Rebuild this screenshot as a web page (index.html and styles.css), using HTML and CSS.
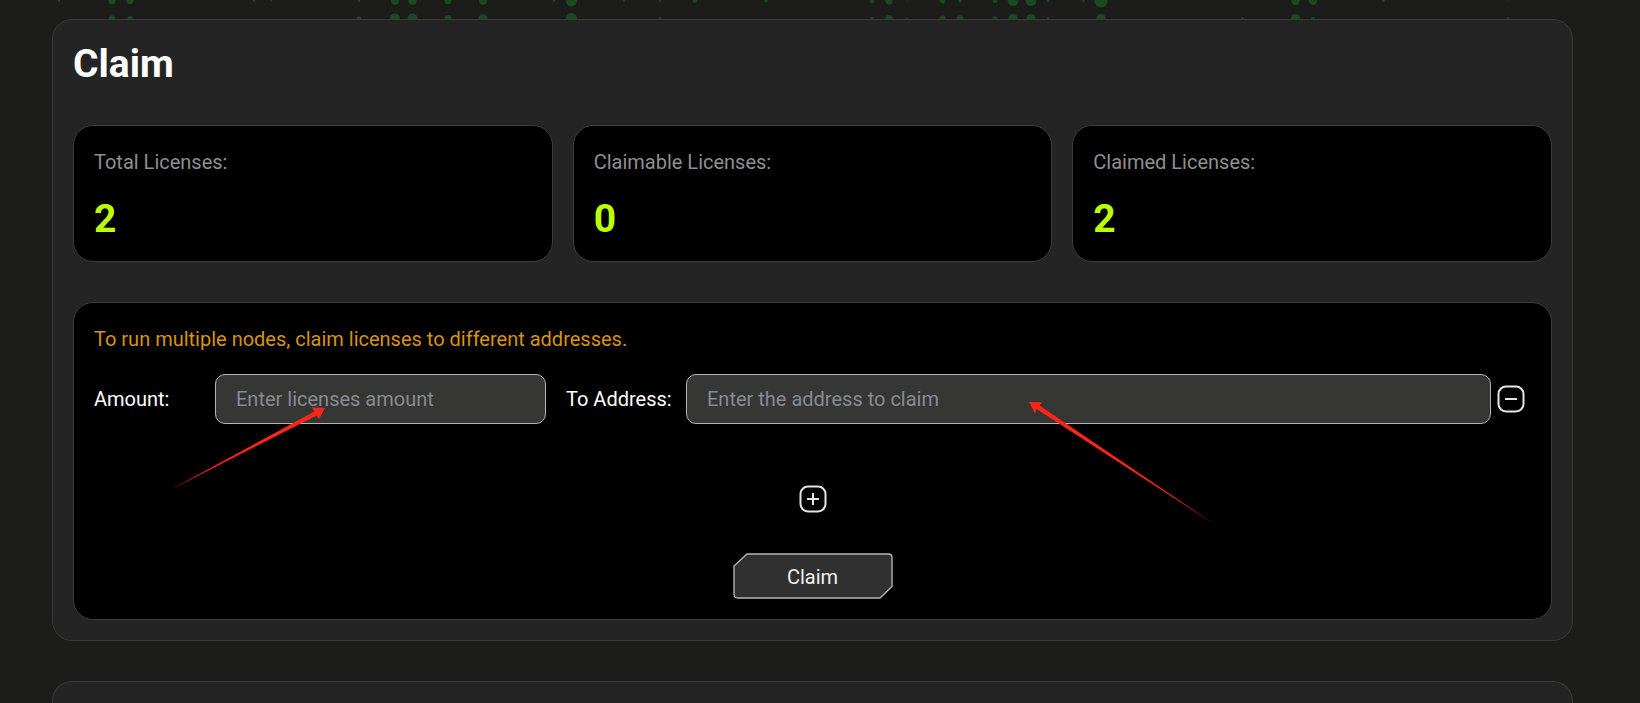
FILE: index.html
```html
<!DOCTYPE html>
<html lang="en">
<head>
<meta charset="utf-8">
<title>Claim</title>
<link rel="stylesheet" href="styles.css">
</head>
<body>
<svg class="dots" width="1640" height="36" viewBox="0 0 1640 36" aria-hidden="true">
  <g>
    <circle cx="59" cy=".8" r="1.3"/><circle cx="112" cy=".8" r="3.6"/><circle cx="130" cy=".8" r="3.4"/><circle cx="254" cy=".8" r="1.3"/><circle cx="271" cy=".8" r="1"/><circle cx="359" cy=".8" r="1.3"/><circle cx="395" cy=".8" r="4"/><circle cx="412.5" cy=".8" r="4.3"/><circle cx="448" cy=".8" r="3.5"/><circle cx="483" cy=".8" r="4"/><circle cx="554" cy=".8" r="1.3"/><circle cx="571.5" cy=".8" r="5.6"/><circle cx="624" cy=".8" r="1"/><circle cx="660" cy=".8" r="1.2"/><circle cx="695" cy=".8" r="2.2"/><circle cx="766" cy=".8" r="1.8"/><circle cx="872" cy=".8" r="2.2"/><circle cx="889" cy=".8" r="3.6"/><circle cx="907" cy=".8" r=".5"/><circle cx="942.5" cy=".8" r="2.7"/><circle cx="960" cy=".8" r="1.8"/><circle cx="995" cy=".8" r="2.3"/><circle cx="1013" cy=".8" r="5.3"/><circle cx="1031" cy=".8" r="5.3"/><circle cx="1048" cy=".8" r="1.6"/><circle cx="1083.5" cy=".8" r="1.3"/><circle cx="1101" cy=".8" r="6.6"/><circle cx="1295.5" cy=".8" r="4.2"/><circle cx="1313" cy=".8" r="4.2"/><circle cx="1383.5" cy=".8" r="1.4"/><circle cx="1508" cy=".8" r=".5"/>
  </g>
  <g>
    <circle cx="112" cy="18.6" r="3.2"/><circle cx="130" cy="18.6" r="2.5"/><circle cx="359" cy="18.6" r="2.4"/><circle cx="395" cy="18.6" r="5"/><circle cx="412.5" cy="18.6" r="5"/><circle cx="448" cy="18.6" r="3.7"/><circle cx="483" cy="18.6" r="4.5"/><circle cx="571.5" cy="18.6" r="5.6"/><circle cx="660" cy="18.6" r="1.4"/><circle cx="872" cy="18.6" r="1.9"/><circle cx="889" cy="18.6" r="3.6"/><circle cx="907" cy="18.6" r="1"/><circle cx="942.5" cy="18.6" r="3"/><circle cx="960" cy="18.6" r="3.4"/><circle cx="995" cy="18.6" r="2.4"/><circle cx="1013" cy="18.6" r="4.7"/><circle cx="1031" cy="18.6" r="4.7"/><circle cx="1048" cy="18.6" r="1.6"/><circle cx="1101" cy="18.6" r="4.7"/><circle cx="1242.5" cy="18.6" r="1.3"/><circle cx="1295.5" cy="18.6" r="4.7"/><circle cx="1313" cy="18.6" r="1.8"/><circle cx="1508" cy="18.6" r="1.7"/>
  </g>
</svg>

<main class="page">
  <section class="panel">
    <h1 class="title">Claim</h1>

    <div class="stats">
      <div class="card"><span class="stat-label">Total Licenses:</span><strong class="stat-value">2</strong></div>
      <div class="card"><span class="stat-label">Claimable Licenses:</span><strong class="stat-value">0</strong></div>
      <div class="card"><span class="stat-label">Claimed Licenses:</span><strong class="stat-value">2</strong></div>
    </div>

    <form class="card claim-form">
      <p class="hint">To run multiple nodes, claim licenses to different addresses.</p>
      <div class="row">
        <label for="amount">Amount:</label>
        <input class="field" id="amount" type="text" placeholder="Enter licenses amount">
        <label class="label-address" for="address">To Address:</label>
        <input class="field" id="address" type="text" placeholder="Enter the address to claim">
        <button class="icon-button remove" type="button" aria-label="Remove row">
          <svg width="28" height="28" viewBox="0 0 28 28"><rect x="1.5" y="1.5" width="25" height="25" rx="7.5"/><path d="M8 14h12"/></svg>
        </button>
      </div>
      <button class="icon-button add" type="button" aria-label="Add row">
        <svg width="28" height="28" viewBox="0 0 28 28"><rect x="1.5" y="1.5" width="25" height="25" rx="7.5"/><path d="M8 14h12M14 8v12"/></svg>
      </button>
      <button class="submit" type="button">
        <svg class="submit-shape" viewBox="0 0 160 46" preserveAspectRatio="none" aria-hidden="true"><path d="M14 1H155.5Q159 1 159 4.5V33.5L147 45H4.5Q1 45 1 41.5V13Z"/></svg>
        <span class="submit-text">Claim</span>
      </button>
    </form>
  </section>

  <section class="panel panel-next"></section>
</main>

<svg class="arrows" width="1640" height="703" viewBox="0 0 1640 703" aria-hidden="true">
  <path d="M325 408L312 407.3L314.3 411.5L170 490L316.7 415.5L319 419Z"/>
  <path d="M1029 402L1042.5 402.3L1039.5 405.5L1214 524L1036.5 409L1035 413.5Z"/>
</svg>
</body>
</html>
```
FILE: styles.css
```css
* {
  box-sizing: border-box;
}

body {
  margin: 0;
  position: relative;
  min-height: 100vh;
  display: flex;
  flex-direction: column;
  overflow-x: hidden;
  background: #1c1c1a;
  color: #fff;
  font: 20px/32px Roboto, "Liberation Sans", sans-serif;
}

.dots,
.arrows {
  position: absolute;
  top: 0;
  left: 0;
  pointer-events: none;
}

.dots {
  fill: #1a4a20;
}

.arrows {
  fill: #fb2518;
}

.page {
  position: relative;
  flex: 1;
  display: flex;
  flex-direction: column;
  gap: 40px;
  padding: 19px 67px 0 52px;
}

.panel {
  padding: 20px;
  border: 1px solid #3a3a39;
  border-radius: 20px;
  background: #242424;
}

.panel-next {
  flex: 1;
  padding-bottom: 0;
  border-bottom: 0;
  border-radius: 20px 20px 0 0;
}

.title {
  margin: 0 0 37px;
  font-size: 39px;
  line-height: 48px;
  font-weight: 700;
}

.stats {
  display: grid;
  grid-template-columns: repeat(3, 1fr);
  gap: 20px;
  margin-bottom: 40px;
}

.card {
  display: flex;
  flex-direction: column;
  padding: 20px;
  border: 1px solid #3c3c3c;
  border-radius: 20px;
  background: #000;
}

.stat-label {
  color: #8f8f8f;
}

.stat-value {
  margin-top: 20px;
  color: #bdff00;
  font-size: 39px;
  line-height: 43px;
  font-weight: 700;
}

.claim-form {
  align-items: center;
}

.hint {
  align-self: stretch;
  margin: 0 0 19px;
  color: #d8930f;
}

.row {
  align-self: stretch;
  display: grid;
  grid-template-columns: 121px 331fr 140px 805fr 40px;
  align-items: center;
}

.label-address {
  padding-left: 20px;
}

.field {
  width: 100%;
  min-width: 0;
  height: 50px;
  padding: 0 20px;
  border: 1px solid #b4b4b6;
  border-radius: 10px;
  background: #363634;
  color: #fff;
  font: inherit;
}

.field::placeholder {
  color: #868b95;
  opacity: 1;
}

.icon-button {
  display: block;
  padding: 0;
  border: 0;
  background: none;
}

.icon-button svg {
  display: block;
  fill: none;
  stroke: #e6e6e6;
  stroke-width: 2;
}

.remove {
  justify-self: center;
}

.add {
  margin: 61px 0 40px;
}

.submit {
  position: relative;
  width: 160px;
  height: 46px;
  padding: 2px 0 0;
  border: 0;
  background: none;
  color: #f0f0f0;
  font: inherit;
}

.submit-shape {
  position: absolute;
  inset: 0;
  width: 100%;
  height: 100%;
  fill: #303030;
  stroke: #b8b8b8;
  stroke-width: 1.3;
}

.submit-text {
  position: relative;
}
```
